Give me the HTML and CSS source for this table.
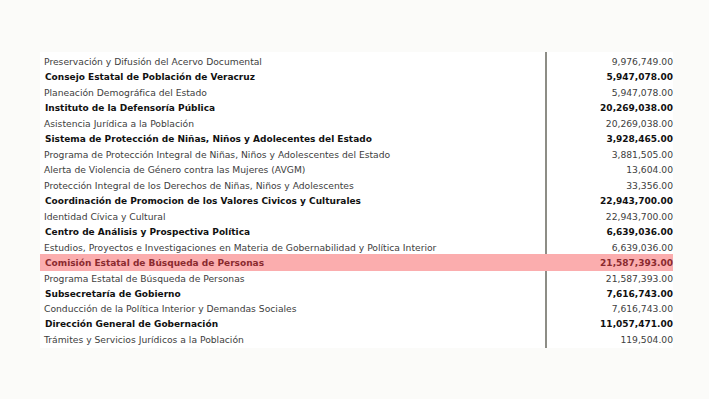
FILE: index.html
```html
<!DOCTYPE html>
<html lang="es">
<head>
<meta charset="utf-8">
<title>Presupuesto</title>
<link rel="stylesheet" href="styles.css">
</head>
<body>
<div class="page">
  <div class="panel">
    <div class="row"><span class="name">Preservación y Difusión del Acervo Documental</span><span class="amt">9,976,749.00</span></div>
    <div class="row head"><span class="name">Consejo Estatal de Población de Veracruz</span><span class="amt">5,947,078.00</span></div>
    <div class="row"><span class="name">Planeación Demográfica del Estado</span><span class="amt">5,947,078.00</span></div>
    <div class="row head"><span class="name">Instituto de la Defensoría Pública</span><span class="amt">20,269,038.00</span></div>
    <div class="row"><span class="name">Asistencia Jurídica a la Población</span><span class="amt">20,269,038.00</span></div>
    <div class="row head"><span class="name">Sistema de Protección de Niñas, Niños y Adolecentes del Estado</span><span class="amt">3,928,465.00</span></div>
    <div class="row"><span class="name">Programa de Protección Integral de Niñas, Niños y Adolescentes del Estado</span><span class="amt">3,881,505.00</span></div>
    <div class="row"><span class="name">Alerta de Violencia de Género contra las Mujeres (AVGM)</span><span class="amt">13,604.00</span></div>
    <div class="row"><span class="name">Protección Integral de los Derechos de Niñas, Niños y Adolescentes</span><span class="amt">33,356.00</span></div>
    <div class="row head"><span class="name">Coordinación de Promocion de los Valores Civicos y Culturales</span><span class="amt">22,943,700.00</span></div>
    <div class="row"><span class="name">Identidad Cívica y Cultural</span><span class="amt">22,943,700.00</span></div>
    <div class="row head"><span class="name">Centro de Análisis y Prospectiva Política</span><span class="amt">6,639,036.00</span></div>
    <div class="row"><span class="name">Estudios, Proyectos e Investigaciones en Materia de Gobernabilidad y Política Interior</span><span class="amt">6,639,036.00</span></div>
    <div class="row head mark"><span class="name">Comisión Estatal de Búsqueda de Personas</span><span class="amt">21,587,393.00</span></div>
    <div class="row"><span class="name">Programa Estatal de Búsqueda de Personas</span><span class="amt">21,587,393.00</span></div>
    <div class="row head"><span class="name">Subsecretaría de Gobierno</span><span class="amt">7,616,743.00</span></div>
    <div class="row"><span class="name">Conducción de la Política Interior y Demandas Sociales</span><span class="amt">7,616,743.00</span></div>
    <div class="row head"><span class="name">Dirección General de Gobernación</span><span class="amt">11,057,471.00</span></div>
    <div class="row"><span class="name">Trámites y Servicios Jurídicos a la Población</span><span class="amt">119,504.00</span></div>
  </div>
</div>
</body>
</html>
```
FILE: styles.css
```css
html, body {
  margin: 0;
  padding: 0;
  background: #fbfbf9;
}
.page {
  width: 709px;
  height: 399px;
  padding-top: 52px;
  box-sizing: border-box;
}
.panel {
  margin-left: 40px;
  width: 633px;
  padding-top: 2px;
  background: #ffffff;
  background-image: linear-gradient(#8d8d86, #8d8d86);
  background-size: 2px 100%;
  background-position: 505px 0;
  background-repeat: no-repeat;
  font-family: "DejaVu Sans", Verdana, sans-serif;
  font-size: 9.2px;
}
.row {
  display: grid;
  grid-template-columns: 507px 126px;
  height: 15.46px;
  align-items: center;
  color: #404040;
}
.name {
  padding-left: 4px;
  white-space: nowrap;
}
.amt {
  text-align: right;
}
.head {
  color: #111111;
  font-weight: bold;
  font-size: 9px;
}
.head .name {
  padding-left: 5px;
}
.mark {
  height: 17px;
  margin: -0.77px 0;
  background: #fbadae;
  color: #8a2a2e;
}
```
